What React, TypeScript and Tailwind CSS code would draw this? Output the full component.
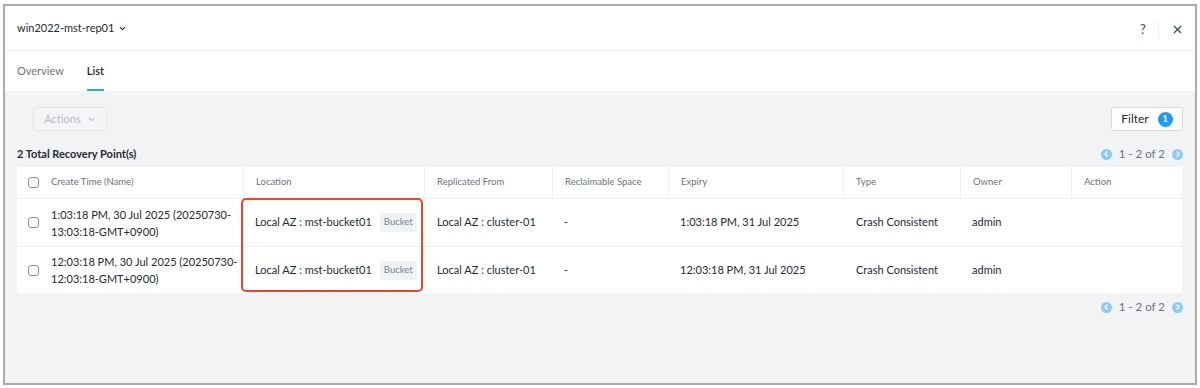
import { ChevronDown, ChevronLeft, ChevronRight, X } from "lucide-react";

const rows = [
    {
        time: ["1:03:18 PM, 30 Jul 2025 (20250730-", "13:03:18-GMT+0900)"],
        location: "Local AZ : mst-bucket01",
        from: "Local AZ : cluster-01",
        space: "-",
        expiry: "1:03:18 PM, 31 Jul 2025",
        type: "Crash Consistent",
        owner: "admin",
    },
    {
        time: ["12:03:18 PM, 30 Jul 2025 (20250730-", "12:03:18-GMT+0900)"],
        location: "Local AZ : mst-bucket01",
        from: "Local AZ : cluster-01",
        space: "-",
        expiry: "12:03:18 PM, 31 Jul 2025",
        type: "Crash Consistent",
        owner: "admin",
    },
];

const cols = "grid grid-cols-[226px_181px_128px_116px_175px_117px_111px_111px]";

function Checkbox() {
    return <span className="block shrink-0 w-[11px] h-[11px] rounded-[3px] border border-[#8a929c] bg-white" />;
}

function Pager() {
    return (
        <div className="flex items-center gap-[5px] text-[11.5px] leading-[14px] text-[#6a7480]">
            <span className="w-[11px] h-[11px] rounded-full bg-[#8ccbf3] flex items-center justify-center">
                <ChevronLeft className="w-[8px] h-[8px] text-white" strokeWidth={4} />
            </span>
            <span className="px-[2px]">1 - 2 of 2</span>
            <span className="w-[11px] h-[11px] rounded-full bg-[#8ccbf3] flex items-center justify-center">
                <ChevronRight className="w-[8px] h-[8px] text-white" strokeWidth={4} />
            </span>
        </div>
    );
}

export default function App() {
    return (
        <div className="w-[1200px] h-[388px] bg-white pt-[4px] pl-[3px] pr-[3px] pb-[3px] font-['Lato',sans-serif] text-[#252a31]">
            <div className="h-full border-2 border-[#ababab] flex flex-col bg-[#f2f3f5]">
                {/* Header */}
                <div className="h-[45px] bg-white border-b border-[#f1f2f4] flex items-center justify-between pl-3 pr-[11px]">
                    <div className="flex items-center gap-[4px] text-[11px]">
                        win2022-mst-rep01
                        <ChevronDown className="w-[9px] h-[9px]" strokeWidth={3} />
                    </div>
                    <div className="flex items-center pt-[3px]">
                        <span className="text-[13px] text-[#5b6570] font-semibold">?</span>
                        <span className="w-px h-[18px] bg-[#eef0f2] mx-[12px]" />
                        <X className="w-[13px] h-[13px] text-[#4b5560]" strokeWidth={2.5} />
                    </div>
                </div>

                {/* Tabs */}
                <div className="h-[40px] bg-white flex items-end gap-[23px] px-3 text-[11px]">
                    <div className="pb-[12px] text-[#6a7480]">Overview</div>
                    <div className="pb-[10px] border-b-2 border-[#2aa3f3] font-semibold">List</div>
                </div>

                {/* Body */}
                <div className="flex-1 px-3 pt-[16px]">
                    <div className="flex items-center justify-between">
                        <button className="ml-[16px] h-[24px] w-[74px] rounded-[3px] border border-[#e3e6ea] bg-[#f4f5f7] text-[11px] text-[#b7bdc5] flex items-center justify-center gap-[6px]">
                            Actions
                            <ChevronDown className="w-[9px] h-[9px]" strokeWidth={3} />
                        </button>
                        <button className="h-[24px] w-[72px] rounded-[3px] border border-[#d7dbe0] bg-white text-[12px] flex items-center justify-center gap-[9px]">
                            Filter
                            <span className="w-[15px] h-[15px] rounded-full bg-[#1e9bf5] text-white text-[9px] font-bold flex items-center justify-center">
                                1
                            </span>
                        </button>
                    </div>

                    <div className="flex items-center justify-between mt-[15px] h-[16px]">
                        <div className="text-[11px] font-bold">2 Total Recovery Point(s)</div>
                        <Pager />
                    </div>

                    {/* Table */}
                    <div className="relative mt-[5px] bg-white rounded-[3px] w-[1165px]">
                        <div className={`${cols} h-[32px] border-b border-[#eceef1] text-[9.5px] text-[#6a7480]`}>
                            <div className="flex items-center gap-[12px] pl-[11px]">
                                <Checkbox />
                                Create Time (Name)
                            </div>
                            {["Location", "Replicated From", "Reclaimable Space", "Expiry", "Type", "Owner", "Action"].map((h) => (
                                <div key={h} className="flex items-center pl-[12px] border-l border-[#f0f1f3]">
                                    {h}
                                </div>
                            ))}
                        </div>
                        {rows.map((r, i) => (
                            <div
                                key={i}
                                className={`${cols} text-[11px] ${i === 0 ? "h-[48px] border-b border-[#eceef1]" : "h-[46px]"}`}
                            >
                                <div className="flex items-center gap-[12px] pl-[11px]">
                                    <Checkbox />
                                    <span className="leading-[17px] whitespace-nowrap">
                                        {r.time[0]}
                                        <br />
                                        {r.time[1]}
                                    </span>
                                </div>
                                <div className="flex items-center pl-[12px] gap-[8px] whitespace-nowrap">
                                    {r.location}
                                    <span className="h-[19px] px-[4px] rounded-[2px] bg-[#f0f2f5] text-[9.5px] text-[#79838e] flex items-center">
                                        Bucket
                                    </span>
                                </div>
                                <div className="flex items-center pl-[13px]">{r.from}</div>
                                <div className="flex items-center pl-[12px]">{r.space}</div>
                                <div className="flex items-center pl-[12px]">{r.expiry}</div>
                                <div className="flex items-center pl-[13px]">{r.type}</div>
                                <div className="flex items-center pl-[12px]">{r.owner}</div>
                                <div />
                            </div>
                        ))}
                        {/* highlight annotation */}
                        <div className="absolute left-[224px] top-[31px] w-[182px] h-[94px] border-2 border-[#f0452a] rounded-[5px] pointer-events-none" />
                    </div>

                    <div className="flex justify-end mt-[7px]">
                        <Pager />
                    </div>
                </div>
            </div>
        </div>
    );
}
